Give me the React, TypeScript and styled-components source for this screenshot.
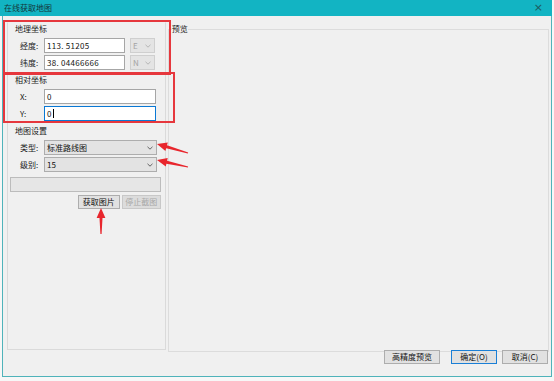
import React from 'react';
import styled, { createGlobalStyle } from 'styled-components';

const Global = createGlobalStyle`
  html, body { margin: 0; padding: 0; background: #ffffff; }
  body { font-family: "Noto Sans CJK SC", "Noto Sans", sans-serif; }
`;

const Screen = styled.div`
  position: relative;
  width: 554px;
  height: 381px;
  overflow: hidden;
  background: #f7f7f7;
  padding-left: 2px;
  box-sizing: border-box;
`;

const Window = styled.div`
  width: 550px;
  height: 377px;
  box-sizing: border-box;
  border: 1px solid #4fb3ba;
  border-top: none;
  display: flex;
  flex-direction: column;
  background: #f0f0f0;
  font-size: 8px;
  line-height: 10px;
  color: #1a1a1a;
`;

const TitleBar = styled.div`
  height: 16px;
  margin: 0 -1px 0 -3px;
  background: #12b4c3;
  display: flex;
  align-items: center;
  justify-content: space-between;
  padding: 0 9px 0 4px;
  color: #12363a;
  font-size: 8px;
`;

const Close = styled.span`
  font-size: 11px;
  color: #1c5a60;
  font-family: "DejaVu Sans", sans-serif;
`;

const Body = styled.div`
  flex: 1;
  display: flex;
  flex-direction: column;
`;

const MainRow = styled.div`
  display: flex;
  gap: 2px;
  padding: 6px 2px 0 4px;
  height: 330px;
  box-sizing: border-box;
  align-items: flex-start;
`;

const LeftPanel = styled.div`
  width: 159px;
  height: 328px;
  box-sizing: border-box;
  border: 1px solid #dadada;
  border-top-color: transparent;
  display: flex;
  flex-direction: column;
  padding-top: 1px;
`;

const Group = styled.div<{ $gapTop: number }>`
  padding-left: 7px;
  margin-top: ${p => p.$gapTop}px;
  display: flex;
  flex-direction: column;
`;

const GroupTitle = styled.div`
  height: 10px;
  line-height: 10px;
  margin-bottom: 4px;
`;

const Rows = styled.div`
  display: flex;
  flex-direction: column;
  gap: 2px;
  padding-left: 5px;
`;

const Row = styled.div`
  display: flex;
  align-items: center;
  height: 15px;
`;

const RowLabel = styled.span`
  width: 24px;
  flex: none;
`;

const TextInput = styled.div<{ $w: number; $focus?: boolean }>`
  width: ${p => p.$w}px;
  height: 15px;
  box-sizing: border-box;
  background: #ffffff;
  border: 1px solid ${p => (p.$focus ? '#0a78d4' : '#a6a6a6')};
  padding: 0 2px;
  display: flex;
  align-items: center;
  color: #111;
  letter-spacing: 0.3px;
`;

const Caret = styled.span`
  width: 1px;
  height: 9px;
  background: #000;
  margin-left: 1px;
`;

const Combo = styled.div<{ $w: number; $disabled?: boolean }>`
  width: ${p => p.$w}px;
  height: 15px;
  box-sizing: border-box;
  margin-left: ${p => (p.$disabled ? 5 : 0)}px;
  background: ${p => (p.$disabled ? '#e4e4e4' : '#e3e3e3')};
  border: 1px solid ${p => (p.$disabled ? '#cfcfcf' : '#adadad')};
  color: ${p => (p.$disabled ? '#a3a3a3' : '#111')};
  display: flex;
  align-items: center;
  justify-content: space-between;
  padding: 0 3px 0 2px;
`;

const Progress = styled.div`
  margin: 5px 4px 0 2px;
  height: 15px;
  box-sizing: border-box;
  background: #e6e6e6;
  border: 1px solid #bcbcbc;
`;

const ButtonRow = styled.div`
  display: flex;
  justify-content: flex-end;
  gap: 2px;
  margin-top: 3px;
  padding-right: 4px;
`;

const Button = styled.div<{ $w: number; $disabled?: boolean; $primary?: boolean; $after?: number }>`
  width: ${p => p.$w}px;
  height: 14px;
  box-sizing: border-box;
  margin-right: ${p => p.$after ?? 0}px;
  display: flex;
  align-items: center;
  justify-content: center;
  background: ${p => (p.$disabled ? '#dcdcdc' : '#e1e1e1')};
  border: 1px solid ${p => (p.$primary ? '#1a7fd6' : p.$disabled ? '#c8c8c8' : '#adadad')};
  color: ${p => (p.$disabled ? '#a8a8a8' : '#111')};
`;

const Preview = styled.fieldset`
  margin: 2px 0 0 0;
  padding: 0;
  width: 382px;
  height: 328px;
  box-sizing: border-box;
  border: 1px solid #dcdcdc;
  min-width: 0;
`;

const Legend = styled.legend`
  padding: 0;
  margin-left: 3px;
  height: 10px;
  line-height: 10px;
  font-size: 8px;
`;

const Footer = styled.div`
  display: flex;
  justify-content: flex-end;
  padding: 4px 3px 0 0;
  gap: 5px;
`;

const Annotation = styled.div`
  position: absolute;
  box-sizing: border-box;
  border: 2px solid #e6373d;
  pointer-events: none;
`;

const Overlay = styled.svg`
  position: absolute;
  left: 0;
  top: 0;
  pointer-events: none;
`;

const Chevron: React.FC<{ color?: string }> = ({ color = '#555' }) => (
  <svg width="6" height="4" viewBox="0 0 6 4">
    <path d="M0.5 0.8 L3 3.2 L5.5 0.8" fill="none" stroke={color} strokeWidth="0.9" />
  </svg>
);

function arrow(x1: number, y1: number, x2: number, y2: number, head = 10, hw = 4.4, sw = 1.5, tw = 0.6) {
  const dx = x2 - x1;
  const dy = y2 - y1;
  const L = Math.hypot(dx, dy);
  const ux = dx / L;
  const uy = dy / L;
  const px = -uy;
  const py = ux;
  const bx = x2 - ux * head;
  const by = y2 - uy * head;
  const pts = [
    [x1 + px * tw, y1 + py * tw],
    [bx + px * sw, by + py * sw],
    [bx + px * hw, by + py * hw],
    [x2, y2],
    [bx - px * hw, by - py * hw],
    [bx - px * sw, by - py * sw],
    [x1 - px * tw, y1 - py * tw],
  ];
  return pts.map(p => `${p[0].toFixed(1)},${p[1].toFixed(1)}`).join(' ');
}

export default function App() {
  return (
    <>
      <Global />
      <Screen>
        <Window>
          <TitleBar>
            <span>在线获取地图</span>
            <Close>×</Close>
          </TitleBar>
          <Body>
            <MainRow>
              <LeftPanel>
                <Group $gapTop={0}>
                  <GroupTitle>地理坐标</GroupTitle>
                  <Rows>
                    <Row>
                      <RowLabel>经度:</RowLabel>
                      <TextInput $w={81}>113. 51205</TextInput>
                      <Combo $w={25} $disabled>
                        <span>E</span>
                        <Chevron color="#b0b0b0" />
                      </Combo>
                    </Row>
                    <Row>
                      <RowLabel>纬度:</RowLabel>
                      <TextInput $w={81}>38. 04466666</TextInput>
                      <Combo $w={25} $disabled>
                        <span>N</span>
                        <Chevron color="#b0b0b0" />
                      </Combo>
                    </Row>
                  </Rows>
                </Group>
                <Group $gapTop={5}>
                  <GroupTitle>相对坐标</GroupTitle>
                  <Rows>
                    <Row>
                      <RowLabel>X:</RowLabel>
                      <TextInput $w={112}>0</TextInput>
                    </Row>
                    <Row>
                      <RowLabel>Y:</RowLabel>
                      <TextInput $w={112} $focus>
                        0<Caret />
                      </TextInput>
                    </Row>
                  </Rows>
                </Group>
                <Group $gapTop={5}>
                  <GroupTitle>地图设置</GroupTitle>
                  <Rows>
                    <Row>
                      <RowLabel>类型:</RowLabel>
                      <Combo $w={113}>
                        <span>标准路线图</span>
                        <Chevron />
                      </Combo>
                    </Row>
                    <Row>
                      <RowLabel>级别:</RowLabel>
                      <Combo $w={113}>
                        <span>15</span>
                        <Chevron />
                      </Combo>
                    </Row>
                  </Rows>
                </Group>
                <Progress />
                <ButtonRow>
                  <Button $w={42}>获取图片</Button>
                  <Button $w={39} $disabled>停止截图</Button>
                </ButtonRow>
              </LeftPanel>
              <Preview>
                <Legend>预览</Legend>
              </Preview>
            </MainRow>
            <Footer>
              <Button $w={56} $after={6}>高精度预览</Button>
              <Button $w={46} $primary>确定(O)</Button>
              <Button $w={46}>取消(C)</Button>
            </Footer>
          </Body>
        </Window>
        <Annotation style={{ left: 3, top: 20, width: 168, height: 55 }} />
        <Annotation style={{ left: 3, top: 72, width: 172, height: 51 }} />
        <Overlay width="554" height="381" viewBox="0 0 554 381">
          <polygon points={arrow(188, 153, 157, 144)} fill="#e8262d" />
          <polygon points={arrow(188, 167, 157, 160)} fill="#e8262d" />
          <polygon points={arrow(101, 234, 101, 208)} fill="#e8262d" />
        </Overlay>
      </Screen>
    </>
  );
}
